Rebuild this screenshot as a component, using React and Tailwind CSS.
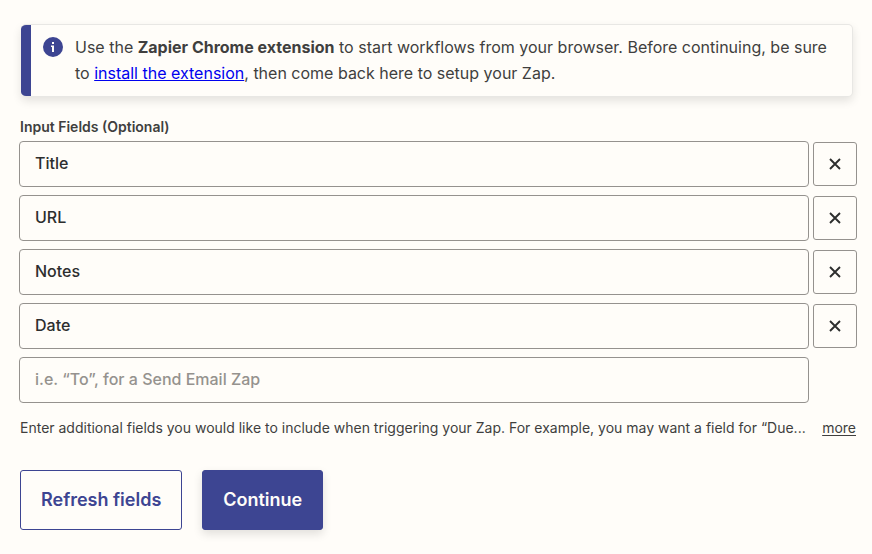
import { useState } from 'react';

const PLACEHOLDER = 'i.e. “To”, for a Send Email Zap';

const inputStyles =
  'h-[46px] min-w-0 flex-1 rounded border border-[#95928e] bg-[#fffdf9] px-[15px] pb-0.5 text-base font-medium text-[#2d2e2e] placeholder:text-[#95928e] placeholder:opacity-100 focus:border-[#3d4592] focus:outline-none';

function InfoIcon() {
  return (
    <svg className="mt-[3px] size-5 shrink-0" viewBox="0 0 20 20" aria-hidden="true">
      <circle cx="10" cy="10" r="10" fill="#3d4592" />
      <path d="M9 5h2v2H9zM8 8.5h3V15H9v-5H8z" fill="#fffdf9" />
    </svg>
  );
}

function CloseIcon() {
  return (
    <svg className="size-3" viewBox="0 0 12 12" fill="none" aria-hidden="true">
      <path d="M1 1l10 10M11 1L1 11" stroke="#2d2e2e" strokeWidth="1.9" />
    </svg>
  );
}

function Notice() {
  return (
    <div className="mr-1 ml-0.5 flex overflow-hidden rounded-[5px] border border-l-0 border-[#e8e7e4] bg-[#fffdf9] shadow-[0_4px_10px_rgba(0,0,0,0.11)]">
      <div className="w-2.5 shrink-0 bg-[#3d4592]" />
      <div className="flex flex-1 gap-3 px-3 pt-[9px] pb-2.5">
        <InfoIcon />
        <p className="text-base leading-[26px] text-[#403f3e]">
          Use the <strong className="font-bold">Zapier Chrome extension</strong> to start workflows from your
          browser. Before continuing, be sure to{' '}
          <a href="#install" className="text-[#0000ee] underline">
            install the extension
          </a>
          , then come back here to setup your Zap.
        </p>
      </div>
    </div>
  );
}

export default function App() {
  const [fields, setFields] = useState(['Title', 'URL', 'Notes', 'Date']);
  const [draft, setDraft] = useState('');

  const updateField = (index, value) => {
    setFields(fields.map((field, i) => (i === index ? value : field)));
  };

  const removeField = (index) => {
    setFields(fields.filter((_, i) => i !== index));
  };

  return (
    <main className="min-h-screen bg-[#fffdf9] pt-6 pr-[15px] pb-6 pl-[19px] font-['Inter',sans-serif] text-[#403f3e]">
      <Notice />

      <form onSubmit={(e) => e.preventDefault()}>
        <fieldset className="mt-[18px]">
          <legend className="pb-0.5 pl-px text-sm leading-6 font-semibold">Input Fields (Optional)</legend>

          <div className="flex flex-col gap-2">
            {fields.map((field, index) => (
              <div key={index} className="flex items-center gap-1">
                <input
                  type="text"
                  aria-label={`Input field ${index + 1}`}
                  value={field}
                  onChange={(e) => updateField(index, e.target.value)}
                  className={inputStyles}
                />
                <button
                  type="button"
                  aria-label={`Remove ${field}`}
                  onClick={() => removeField(index)}
                  className="flex size-11 shrink-0 items-center justify-center rounded-[3px] border border-[#95928e] hover:bg-[#f7f5f2]"
                >
                  <CloseIcon />
                </button>
              </div>
            ))}

            <div className="flex pr-12">
              <input
                type="text"
                aria-label="New input field"
                placeholder={PLACEHOLDER}
                value={draft}
                onChange={(e) => setDraft(e.target.value)}
                className={inputStyles}
              />
            </div>
          </div>
        </fieldset>

        <div className="mt-[15px] flex gap-4 px-px text-sm leading-5 text-[#403f3e]">
          <p className="min-w-0 flex-1 truncate">
            Enter additional fields you would like to include when triggering your Zap. For example, you may want
            a field for “Due...
          </p>
          <a href="#more" className="underline underline-offset-2">
            more
          </a>
        </div>

        <div className="mt-8 flex gap-5 pl-px">
          <button
            type="button"
            className="h-[60px] rounded-[3px] border border-[#3d4592] px-5 text-lg font-semibold text-[#3d4592] hover:bg-[#f7f5f2]"
          >
            Refresh fields
          </button>
          <button
            type="submit"
            className="h-[60px] rounded-[3px] border border-[#3d4592] bg-[#3d4592] px-5 text-lg font-semibold text-[#fffdf9] shadow-[0_4px_10px_rgba(0,0,0,0.12)] hover:bg-[#2b3175]"
          >
            Continue
          </button>
        </div>
      </form>
    </main>
  );
}
